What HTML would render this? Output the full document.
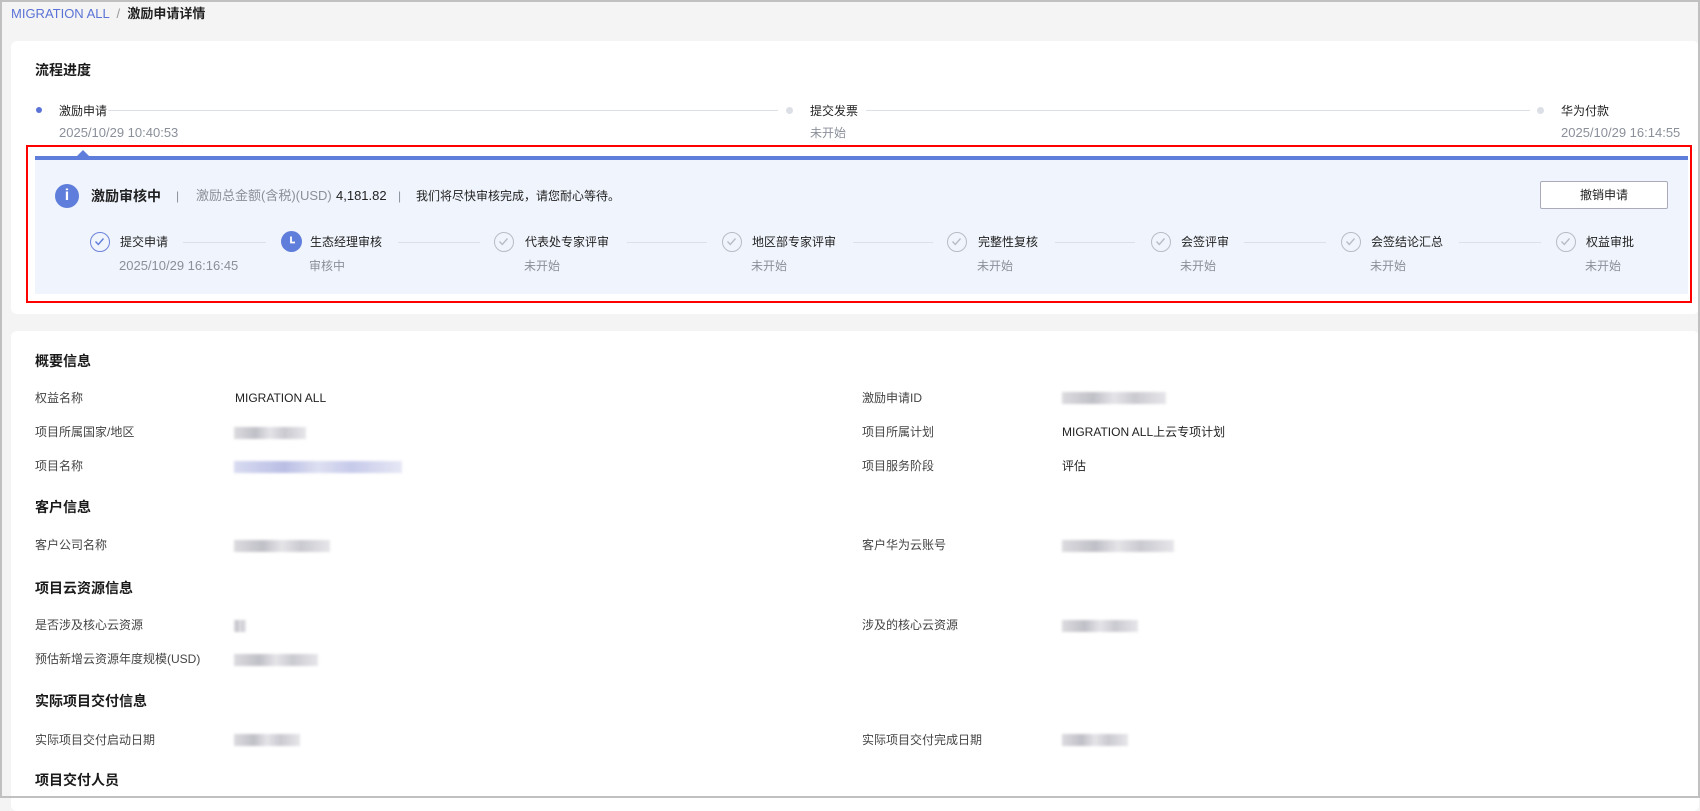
<!DOCTYPE html>
<html><head><meta charset="utf-8"><style>
*{margin:0;padding:0;box-sizing:border-box}
body{width:1700px;height:798px;overflow:hidden;background:#f4f4f4;font-family:"Liberation Sans","Noto Sans CJK SC",sans-serif;font-size:12px;color:#222;position:relative}
.frame{position:absolute;left:0;top:0;width:1700px;height:798px;border:2px solid #c0c0c0;pointer-events:none;z-index:10}
.a{position:absolute;white-space:nowrap;line-height:18px}
.card{position:absolute;background:#fff;border-radius:6px}
.g{color:#8a8f99}
.d{font-size:13px}
.h{font-weight:bold;font-size:14px;color:#1a1a1a}
.blur{position:absolute;height:12px;background:linear-gradient(90deg,#d8d8dc,#b9b9c2 30%,#e2e2e6 50%,#c4c4cc 70%,#e4e4e8);filter:blur(1.2px);opacity:.9}
.bl{background:linear-gradient(90deg,#d4d7ef,#b3b8e2 30%,#dadcf0 50%,#c1c5e8 70%,#e4e5f4)}
.ci{position:absolute;width:20px;height:20px;border-radius:50%;border:1.5px solid #b8bcc4}
.ci svg{position:absolute;left:3px;top:3px}
.line{position:absolute;height:1px;background:#dcdfe6}
</style></head><body>
<div class="frame"></div>
<div class="a" style="left:11px;top:5px;color:#5b73d6;font-size:13px">MIGRATION ALL <span style="color:#999">&nbsp;/&nbsp;</span> <span style="color:#222;font-weight:bold">激励申请详情</span></div>

<div class="card" style="left:11px;top:41px;width:1688px;height:273px"></div>
<div class="a h" style="left:35px;top:61px">流程进度</div>
<div class="a" style="left:36px;top:107px;width:6px;height:6px;border-radius:50%;background:#5b73d6"></div>
<div class="a" style="left:59px;top:102px">激励申请</div>
<div class="a g d" style="left:59px;top:124px">2025/10/29 10:40:53</div>
<div class="line" style="left:108px;top:110px;width:670px"></div>
<div class="a" style="left:786px;top:107px;width:7px;height:7px;border-radius:50%;background:#dcdfe6"></div>
<div class="a" style="left:810px;top:102px">提交发票</div>
<div class="a g" style="left:810px;top:124px">未开始</div>
<div class="line" style="left:866px;top:110px;width:664px"></div>
<div class="a" style="left:1537px;top:107px;width:7px;height:7px;border-radius:50%;background:#dcdfe6"></div>
<div class="a" style="left:1561px;top:102px">华为付款</div>
<div class="a g d" style="left:1561px;top:124px">2025/10/29 16:14:55</div>

<div class="a" style="left:26px;top:145px;width:1666px;height:158px;border:2px solid #f00"></div>
<div class="a" style="left:35px;top:156px;width:1653px;height:138px;background:#f0f4fc;border-top:4px solid #5f7ddb"></div>
<div class="a" style="left:76px;top:150px;width:0;height:0;border-left:7px solid transparent;border-right:7px solid transparent;border-bottom:7px solid #5f7ddb"></div>
<div class="a" style="left:55px;top:184px;width:24px;height:24px;border-radius:50%;background:#5f7ddb;color:#fff;font-weight:bold;text-align:center;line-height:24px;font-size:16px">i</div>
<div class="a" style="left:91px;top:187px;font-weight:bold;font-size:14px">激励审核中</div>
<div class="a g" style="left:176px;top:187px">|</div>
<div class="a g d" style="left:196px;top:187px">激励总金额(含税)(USD)</div>
<div class="a d" style="left:336px;top:187px">4,181.82</div>
<div class="a g" style="left:398px;top:187px">|</div>
<div class="a" style="left:416px;top:187px">我们将尽快审核完成，请您耐心等待。</div>
<div class="a" style="left:1540px;top:181px;width:128px;height:28px;background:#fff;border:1px solid #aab;border-radius:2px;text-align:center;line-height:26px">撤销申请</div>

<div class="ci" style="left:90px;top:232px;border-color:#6c82db"><svg width="11" height="11" viewBox="0 0 11 11"><path d="M1.5 5.5l2.8 3 5.2-6" fill="none" stroke="#5f7ddb" stroke-width="1.4"/></svg></div>
<div class="a" style="left:120px;top:233px">提交申请</div>
<div class="a g d" style="left:119px;top:257px">2025/10/29 16:16:45</div>
<div class="line" style="left:183px;top:242px;width:83px"></div>
<div class="a" style="left:281px;top:231px;width:21px;height:21px;border-radius:50%;background:#5f7ddb"><svg width="21" height="21" viewBox="0 0 21 21" style="position:absolute;left:0;top:0"><path d="M10 5.5v6h4" fill="none" stroke="#fff" stroke-width="1.8"/></svg></div>
<div class="a" style="left:310px;top:233px">生态经理审核</div>
<div class="a g" style="left:309px;top:257px">审核中</div>
<div class="line" style="left:398px;top:242px;width:82px"></div>
<div class="ci" style="left:494px;top:232px"><svg width="11" height="11" viewBox="0 0 11 11"><path d="M1.5 5.5l2.8 3 5.2-6" fill="none" stroke="#b8bcc4" stroke-width="1.4"/></svg></div>
<div class="a" style="left:525px;top:233px">代表处专家评审</div>
<div class="a g" style="left:524px;top:257px">未开始</div>
<div class="line" style="left:627px;top:242px;width:80px"></div>
<div class="ci" style="left:722px;top:232px"><svg width="11" height="11" viewBox="0 0 11 11"><path d="M1.5 5.5l2.8 3 5.2-6" fill="none" stroke="#b8bcc4" stroke-width="1.4"/></svg></div>
<div class="a" style="left:752px;top:233px">地区部专家评审</div>
<div class="a g" style="left:751px;top:257px">未开始</div>
<div class="line" style="left:853px;top:242px;width:80px"></div>
<div class="ci" style="left:947px;top:232px"><svg width="11" height="11" viewBox="0 0 11 11"><path d="M1.5 5.5l2.8 3 5.2-6" fill="none" stroke="#b8bcc4" stroke-width="1.4"/></svg></div>
<div class="a" style="left:978px;top:233px">完整性复核</div>
<div class="a g" style="left:977px;top:257px">未开始</div>
<div class="line" style="left:1055px;top:242px;width:80px"></div>
<div class="ci" style="left:1151px;top:232px"><svg width="11" height="11" viewBox="0 0 11 11"><path d="M1.5 5.5l2.8 3 5.2-6" fill="none" stroke="#b8bcc4" stroke-width="1.4"/></svg></div>
<div class="a" style="left:1181px;top:233px">会签评审</div>
<div class="a g" style="left:1180px;top:257px">未开始</div>
<div class="line" style="left:1244px;top:242px;width:82px"></div>
<div class="ci" style="left:1341px;top:232px"><svg width="11" height="11" viewBox="0 0 11 11"><path d="M1.5 5.5l2.8 3 5.2-6" fill="none" stroke="#b8bcc4" stroke-width="1.4"/></svg></div>
<div class="a" style="left:1371px;top:233px">会签结论汇总</div>
<div class="a g" style="left:1370px;top:257px">未开始</div>
<div class="line" style="left:1459px;top:242px;width:82px"></div>
<div class="ci" style="left:1556px;top:232px"><svg width="11" height="11" viewBox="0 0 11 11"><path d="M1.5 5.5l2.8 3 5.2-6" fill="none" stroke="#b8bcc4" stroke-width="1.4"/></svg></div>
<div class="a" style="left:1586px;top:233px">权益审批</div>
<div class="a g" style="left:1585px;top:257px">未开始</div>

<div class="card" style="left:11px;top:331px;width:1688px;height:480px"></div>
<div class="a h" style="left:35px;top:352px">概要信息</div>
<div class="a" style="left:35px;top:389px;color:#444">权益名称</div>
<div class="a" style="left:235px;top:389px">MIGRATION ALL</div>
<div class="a" style="left:862px;top:389px;color:#444">激励申请ID</div>
<div class="blur" style="left:1062px;top:392px;width:104px"></div>
<div class="a" style="left:35px;top:423px;color:#444">项目所属国家/地区</div>
<div class="blur" style="left:234px;top:427px;width:72px"></div>
<div class="a" style="left:862px;top:423px;color:#444">项目所属计划</div>
<div class="a" style="left:1062px;top:423px">MIGRATION ALL上云专项计划</div>
<div class="a" style="left:35px;top:457px;color:#444">项目名称</div>
<div class="blur bl" style="left:234px;top:461px;width:168px"></div>
<div class="a" style="left:862px;top:457px;color:#444">项目服务阶段</div>
<div class="a" style="left:1062px;top:457px">评估</div>

<div class="a h" style="left:35px;top:498px">客户信息</div>
<div class="a" style="left:35px;top:536px;color:#444">客户公司名称</div>
<div class="blur" style="left:234px;top:540px;width:96px"></div>
<div class="a" style="left:862px;top:536px;color:#444">客户华为云账号</div>
<div class="blur" style="left:1062px;top:540px;width:112px"></div>

<div class="a h" style="left:35px;top:579px">项目云资源信息</div>
<div class="a" style="left:35px;top:616px;color:#444">是否涉及核心云资源</div>
<div class="blur" style="left:234px;top:620px;width:12px"></div>
<div class="a" style="left:862px;top:616px;color:#444">涉及的核心云资源</div>
<div class="blur" style="left:1062px;top:620px;width:76px"></div>
<div class="a" style="left:35px;top:650px;color:#444">预估新增云资源年度规模(USD)</div>
<div class="blur" style="left:234px;top:654px;width:84px"></div>

<div class="a h" style="left:35px;top:692px">实际项目交付信息</div>
<div class="a" style="left:35px;top:731px;color:#444">实际项目交付启动日期</div>
<div class="blur" style="left:234px;top:734px;width:66px"></div>
<div class="a" style="left:862px;top:731px;color:#444">实际项目交付完成日期</div>
<div class="blur" style="left:1062px;top:734px;width:66px"></div>
<div class="a h" style="left:35px;top:771px">项目交付人员</div>
</body></html>
